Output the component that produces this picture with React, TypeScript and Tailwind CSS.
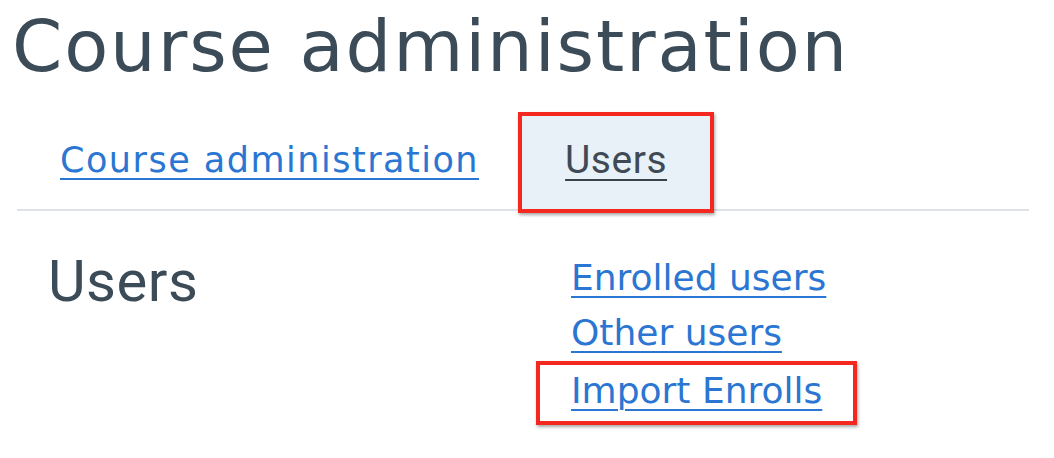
import React from "react";

// Course administration page - heading, tabs and the Users link section
const poppinsLike = { fontFamily: '"DejaVu Sans", "Noto Sans", sans-serif' };

const App = () => {
  return (
    <div className="w-[1054px] h-[458px] bg-white overflow-hidden">
      {/* Page title */}
      <h1
        className="pl-[12px] pt-[6px] text-[72px] leading-[80px] text-[#3b4b57] tracking-[1.9px]"
        style={poppinsLike}
      >
        Course administration
      </h1>

      {/* Tabs */}
      <div className="ml-[17px] mr-[25px] mt-[26px] flex items-start border-b-2 border-[#dee2e6]">
        <a
          href="#"
          className="px-[43px] h-[97px] flex items-center text-[35px] tracking-[1.5px] text-[#2a76d2] underline underline-offset-[6px] decoration-2"
          style={poppinsLike}
        >
          Course administration
        </a>
        <a
          href="#"
          className="-mb-[4px] ml-[-4px] w-[196px] h-[101px] flex items-center justify-center pb-[4px] bg-[#e9f1f8] border-4 border-[#f4281e] shadow-[1px_2px_3px_rgba(0,0,0,0.35)] text-[39px] tracking-[0.5px] text-[#3f4a55] underline underline-offset-[6px] decoration-2 decoration-[#3a434c]"
          style={{ fontFamily: "Roboto, sans-serif" }}
        >
          Users
        </a>
      </div>

      {/* Users section */}
      <div className="flex pt-[30px]">
        <h2
          className="pl-[48px] w-[571px] text-[58px] leading-[80px] text-[#3b4b57] tracking-[0.5px]"
          style={{ fontFamily: "Roboto, sans-serif" }}
        >
          Users
        </h2>
        <div className="flex flex-col pt-[10px]" style={poppinsLike}>
          <a href="#" className="h-[55px] text-[36px] text-[#2a76d2] underline underline-offset-[6px] decoration-2 w-fit">
            Enrolled users
          </a>
          <a href="#" className="h-[55px] text-[36px] text-[#2a76d2] underline underline-offset-[6px] decoration-2 w-fit">
            Other users
          </a>
          <div className="-ml-[35px] w-[321px] h-[64px] flex items-center pl-[31px] pb-[4px] border-4 border-[#f4281e] shadow-[1px_2px_3px_rgba(0,0,0,0.35)]">
            <a href="#" className="text-[36px] text-[#2a76d2] underline underline-offset-[6px] decoration-2">
              Import Enrolls
            </a>
          </div>
        </div>
      </div>
    </div>
  );
};

export default App;
